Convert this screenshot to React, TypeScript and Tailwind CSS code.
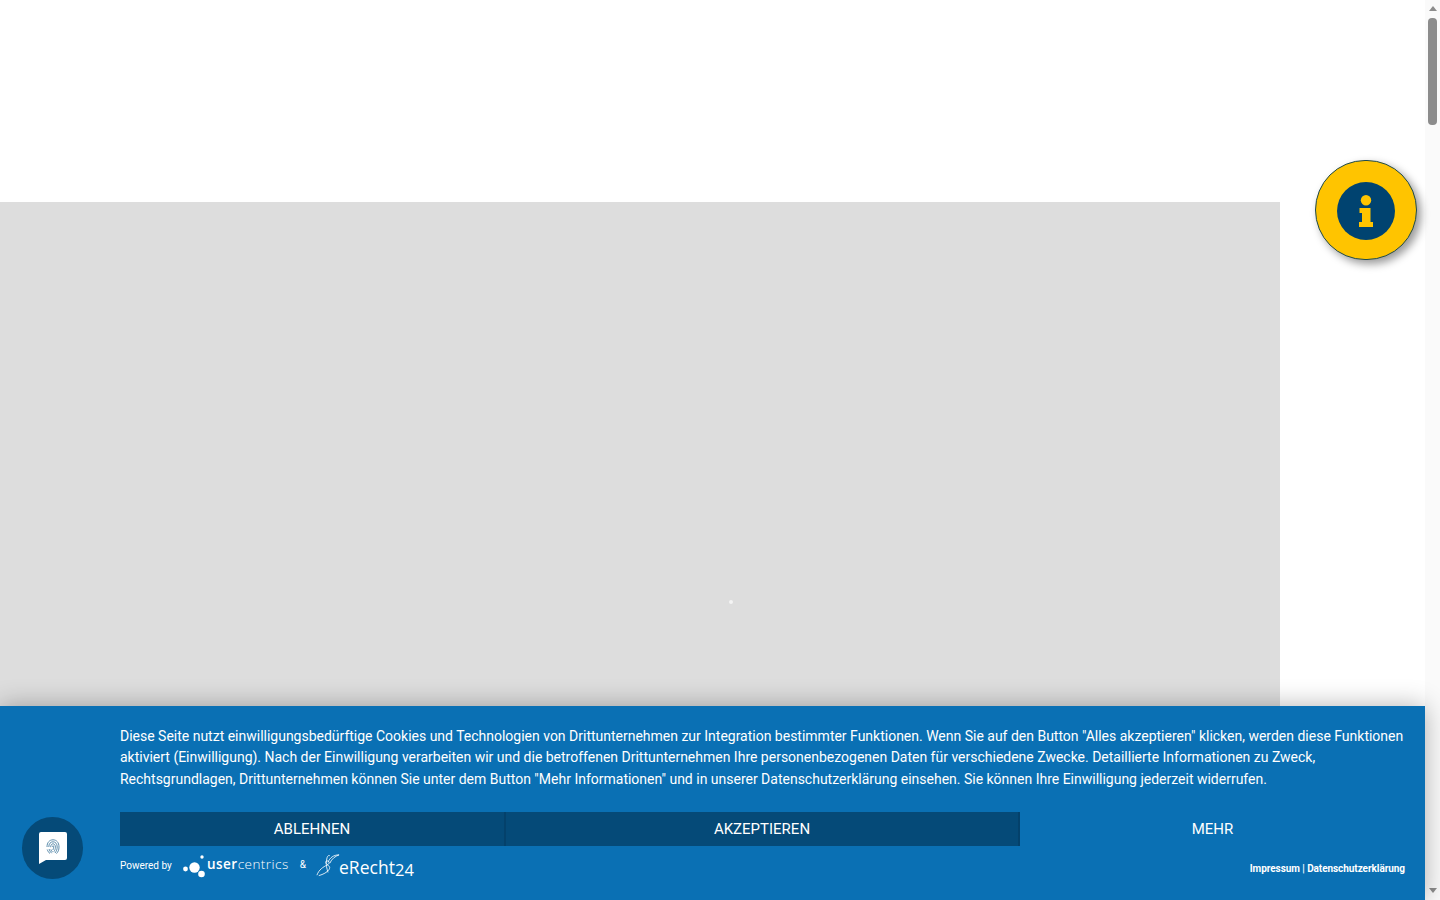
import { Fragment } from "react";

function InfoGlyph() {
  return (
    <svg width="14" height="32" viewBox="0 0 14 32" fill="#ffc400">
      <circle cx="7" cy="5.2" r="5.2" />
      <path d="M0.5 13 H11.5 V27 H14 V32 H0 V27 H3 V18 H0.5 Z" />
    </svg>
  );
}

function FingerprintGlyph() {
  const rings = [
    "M1 8 C1 3.5 3.5 0.8 7 0.8 C10.5 0.8 13 3.5 13 8 C13 11 12 13 10.5 14.6",
    "M1.2 10.5 C2 12.5 2.8 13.6 4 14.6",
    "M2.8 8 C2.8 4.8 4.5 2.8 7 2.8 C9.5 2.8 11.2 4.8 11.2 8 C11.2 10.5 10.4 12.2 9 14",
    "M3 10 C3.5 11.6 4.5 13 5.6 14.2",
    "M4.7 8.2 C4.7 6 5.6 4.8 7 4.8 C8.4 4.8 9.4 6 9.4 8.2 C9.4 10 8.8 11.4 7.8 12.8",
    "M4.9 10.4 C5.2 11.4 5.8 12.4 6.6 13.2",
    "M6.6 8 C6.6 7 6.8 6.7 7 6.7 C7.4 6.7 7.6 7.2 7.6 8.2 C7.6 9.2 7.3 10.2 6.8 11",
  ];
  return (
    <svg width="14" height="15" viewBox="0 0 14 15" fill="none" stroke="#5f8fae" strokeWidth="1">
      {rings.map((d, i) => (
        <Fragment key={i}>
          <path d={d} />
        </Fragment>
      ))}
    </svg>
  );
}

function UsercentricsLogo() {
  return (
    <div className="flex items-center">
      <svg width="24" height="24" viewBox="0 0 24 24">
        <circle cx="2.5" cy="15" r="2.4" fill="#fff" />
        <circle cx="11.5" cy="13.5" r="5.2" fill="#fff" />
        <circle cx="19" cy="3" r="1.7" fill="#fff" />
        <circle cx="18.5" cy="20" r="3.3" fill="#fff" />
      </svg>
      <span className="font-['Open_Sans',sans-serif] text-[13.5px] leading-none tracking-[0.47px] text-white -mt-[2px]">
        <span className="font-semibold">user</span>
        <span className="font-light">centrics</span>
      </span>
    </div>
  );
}

function ERechtLogo() {
  return (
    <div className="flex items-center">
      <svg width="24" height="25" viewBox="0 0 26 25" fill="none" stroke="#fff" strokeWidth="0.9">
        <path d="M1 23 C 3 17, 8 14, 12 12 C 15 10.5, 15 8, 12.5 7.5 C 10 7, 10 10, 12 11.5 C 14 13, 16 14, 14 17 C 12 20, 8 22, 3 23.5" />
        <path d="M13 9 C 15 4, 19 1, 25 1 C 21 2.5, 17 5, 15 10" />
        <path d="M13 20 C 12 16, 10 12, 12 4 C 12.5 2, 14 1, 15 2" />
      </svg>
      <span className="-ml-[1px] font-['Open_Sans',sans-serif] text-[17.5px] leading-none text-white tracking-[0.05px] mt-[4px]">
        eRecht<span className="relative top-[2px] text-[16.5px]">24</span>
      </span>
    </div>
  );
}

function ConsentBanner() {
  return (
    <div className="absolute bottom-0 left-0 right-0 h-[194px] bg-[#0a70b4] shadow-[0_0_24px_rgba(0,0,0,0.3)] font-['Roboto',sans-serif] text-white">
      <div className="flex h-full">
        <div className="w-[120px] shrink-0 pl-[22px] pt-[111px]">
          <div className="w-[61px] h-[62px] rounded-full bg-[#054a78] flex items-center justify-center">
            <div className="relative w-[30px] h-[34px]">
              <svg width="30" height="34" viewBox="0 0 30 34" className="absolute inset-0">
                <path d="M3 1 H27 Q29 1 29 3 V27 Q29 29 27 29 H8 L1 33 V3 Q1 1 3 1 Z" fill="#fff" />
              </svg>
              <div className="absolute left-[8px] top-[8px]">
                <FingerprintGlyph />
              </div>
            </div>
          </div>
        </div>
        <div className="flex-1 min-w-0 pr-5 pt-[19.9px]">
          <p className="text-[14px] leading-[21.5px] tracking-[-0.006px]">
            Diese Seite nutzt einwilligungsbedürftige Cookies und Technologien von Drittunternehmen zur Integration bestimmter Funktionen. Wenn Sie auf den Button "Alles akzeptieren" klicken, werden diese Funktionen aktiviert (Einwilligung). Nach der Einwilligung verarbeiten wir und die betroffenen Drittunternehmen Ihre personenbezogenen Daten für verschiedene Zwecke. Detaillierte Informationen zu Zweck, Rechtsgrundlagen, Drittunternehmen können Sie unter dem Button "Mehr Informationen" und in unserer Datenschutzerklärung einsehen. Sie können Ihre Einwilligung jederzeit widerrufen.
          </p>
          <div className="flex mt-[21.6px] h-[34px] text-[15px] uppercase">
            <div className="w-[385px] bg-[#054a78] border-r border-[#04416b] flex items-center justify-center">Ablehnen</div>
            <div className="w-[515px] bg-[#054a78] border-l border-r-2 border-[#04416b] flex items-center justify-center">Akzeptieren</div>
            <div className="flex-1 flex items-center justify-center">Mehr</div>
          </div>
          <div className="flex items-center justify-between mt-[7px] h-[26px]">
            <div className="flex items-center">
              <span className="text-[10px] w-[63px] -mt-[1px]">Powered by</span>
              <UsercentricsLogo />
              <span className="text-[10px] ml-[11px] mr-[10px] -mt-[2px]">&amp;</span>
              <ERechtLogo />
            </div>
            <div className="text-[10px] font-bold tracking-[-0.065px] mt-[5px]">Impressum | Datenschutzerklärung</div>
          </div>
        </div>
      </div>
    </div>
  );
}

function Scrollbar() {
  return (
    <div className="w-[15px] shrink-0 bg-[#fafafa] flex flex-col items-center">
      <div className="h-[18px] pt-[6px]">
        <div className="w-0 h-0 border-x-[4px] border-x-transparent border-b-[5px] border-b-[#8c8c8c]" />
      </div>
      <div className="w-[9px] h-[107px] rounded-[4px] bg-[#8c8c8c]" />
      <div className="flex-1" />
      <div className="h-[12px]">
        <div className="w-0 h-0 border-x-[4px] border-x-transparent border-t-[5px] border-t-[#8c8c8c]" />
      </div>
    </div>
  );
}

export default function App() {
  return (
    <div className="flex h-screen overflow-hidden bg-white">
      <div className="relative flex-1 pt-[202px]">
        <div className="relative w-[1280px] h-[698px] bg-[#dddddd]">
          <div className="absolute left-[729px] top-[398px] w-[4px] h-[4px] rounded-full bg-[#f4f4f4]" />
        </div>

        <div className="absolute left-[1315px] top-[160px] w-[102px] h-[100px] rounded-full bg-[#ffc400] border border-[#1d4a4f] shadow-[4px_4px_8px_rgba(0,0,0,0.4)] flex items-center justify-center">
          <div className="mt-[2px] w-[58px] h-[58px] rounded-full bg-[#004370] flex items-center justify-center">
            <InfoGlyph />
          </div>
        </div>

        <ConsentBanner />
      </div>
      <Scrollbar />
    </div>
  );
}
